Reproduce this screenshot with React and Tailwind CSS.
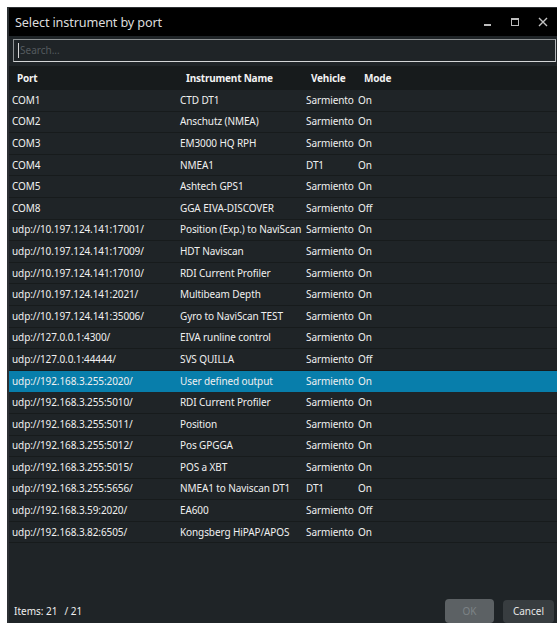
import React from "react";

const rows = [
  ["COM1", "CTD DT1", "Sarmiento", "On"],
  ["COM2", "Anschutz (NMEA)", "Sarmiento", "On"],
  ["COM3", "EM3000 HQ RPH", "Sarmiento", "On"],
  ["COM4", "NMEA1", "DT1", "On"],
  ["COM5", "Ashtech GPS1", "Sarmiento", "On"],
  ["COM8", "GGA EIVA-DISCOVER", "Sarmiento", "Off"],
  ["udp://10.197.124.141:17001/", "Position (Exp.) to NaviScan", "Sarmiento", "On"],
  ["udp://10.197.124.141:17009/", "HDT Naviscan", "Sarmiento", "On"],
  ["udp://10.197.124.141:17010/", "RDI Current Profiler", "Sarmiento", "On"],
  ["udp://10.197.124.141:2021/", "Multibeam Depth", "Sarmiento", "On"],
  ["udp://10.197.124.141:35006/", "Gyro to NaviScan TEST", "Sarmiento", "On"],
  ["udp://127.0.0.1:4300/", "EIVA runline control", "Sarmiento", "On"],
  ["udp://127.0.0.1:44444/", "SVS QUILLA", "Sarmiento", "Off"],
  ["udp://192.168.3.255:2020/", "User defined output", "Sarmiento", "On"],
  ["udp://192.168.3.255:5010/", "RDI Current Profiler", "Sarmiento", "On"],
  ["udp://192.168.3.255:5011/", "Position", "Sarmiento", "On"],
  ["udp://192.168.3.255:5012/", "Pos GPGGA", "Sarmiento", "On"],
  ["udp://192.168.3.255:5015/", "POS a XBT", "Sarmiento", "On"],
  ["udp://192.168.3.255:5656/", "NMEA1 to Naviscan DT1", "DT1", "On"],
  ["udp://192.168.3.59:2020/", "EA600", "Sarmiento", "Off"],
  ["udp://192.168.3.82:6505/", "Kongsberg HiPAP/APOS", "Sarmiento", "On"],
];

const SELECTED = 13;

export default function App() {
  return (
    <div
      className="w-[557px] h-[623px] bg-white pt-[7px] pl-[7px] overflow-hidden"
      style={{ fontFamily: '"Segoe UI", "Noto Sans", sans-serif' }}
    >
      <div className="h-full flex flex-col bg-[#1f2427] border-l-2 border-t border-[#2c3033]">
        {/* title bar */}
        <div className="h-[28px] bg-black flex items-center shrink-0">
          <span className="pl-[6px] pt-[2px] text-[12.7px] text-[#dcdcdc] tracking-[-0.15px]">
            Select instrument by port
          </span>
          <div className="ml-auto flex items-center h-full">
            <div className="w-[28px] h-full flex items-center justify-center">
              <div className="w-[7px] h-[2px] bg-[#bcbcbc] mt-[6px]" />
            </div>
            <div className="w-[28px] h-full flex items-center justify-center">
              <div className="w-[8px] h-[8px] border border-t-2 border-[#bcbcbc]" />
            </div>
            <div className="w-[28px] h-full flex items-center justify-center">
              <svg width="10" height="10" viewBox="0 0 10 10">
                <path d="M1 1 L9 9 M9 1 L1 9" stroke="#c4c4c4" strokeWidth="1.4" />
              </svg>
            </div>
          </div>
        </div>

        {/* search */}
        <div className="h-[30px] shrink-0 pt-[3px] pl-[4px] pr-[1px]">
          <div className="h-[23px] border border-[#8e9294] border-b-[#d4d6d7] border-r-[#b0b3b5] flex items-center pl-[4px]">
            <div className="w-px h-[15px] bg-[#d8d8d8]" />
            <span className="pl-[1px] text-[10px] text-[#545a5e]">Search...</span>
          </div>
        </div>

        {/* column headers */}
        <div className="h-[24px] shrink-0 bg-[#171b1c] flex items-center text-[10px] font-bold text-[#f2f2f2] tracking-[-0.2px]">
          <div className="w-[177px] pl-[8px]">Port</div>
          <div className="w-[125px]">Instrument Name</div>
          <div className="w-[53px]">Vehicle</div>
          <div>Mode</div>
        </div>

        {/* rows */}
        <div className="flex flex-col shrink-0">
          {rows.map((r, i) => (
            <div
              key={i}
              className={
                "h-[21.6px] flex items-center text-[10px] text-[#f0f0f0] tracking-[-0.1px] border-b-[1.5px] " +
                (i === SELECTED
                  ? "bg-[#087eab] border-[#087eab]"
                  : "bg-[#1f2427] border-[#171b1c]")
              }
            >
              <div className="w-[171px] pl-[3px] whitespace-nowrap">{r[0]}</div>
              <div className="w-[126px] whitespace-nowrap">{r[1]}</div>
              <div className="w-[52px] whitespace-nowrap">{r[2]}</div>
              <div>{r[3]}</div>
            </div>
          ))}
        </div>

        <div className="flex-1" />

        {/* footer */}
        <div className="h-[24px] shrink-0 flex items-center">
          <span className="pl-[5px] text-[10px] text-[#f0f0f0]">Items: 21</span>
          <span className="pl-[7px] text-[10px] text-[#f0f0f0]">/ 21</span>
          <div className="ml-auto flex items-center gap-[9px] pr-[3px] h-full">
            <div className="w-[49px] h-[24px] rounded-[4px] bg-[#5c6164] flex items-center justify-center text-[10px] text-[#7d8386]">
              OK
            </div>
            <div className="w-[51px] h-[23px] rounded-[4px] bg-[#383d40] flex items-center justify-center text-[10px] text-[#e6e6e6]">
              Cancel
            </div>
          </div>
        </div>
      </div>
    </div>
  );
}
